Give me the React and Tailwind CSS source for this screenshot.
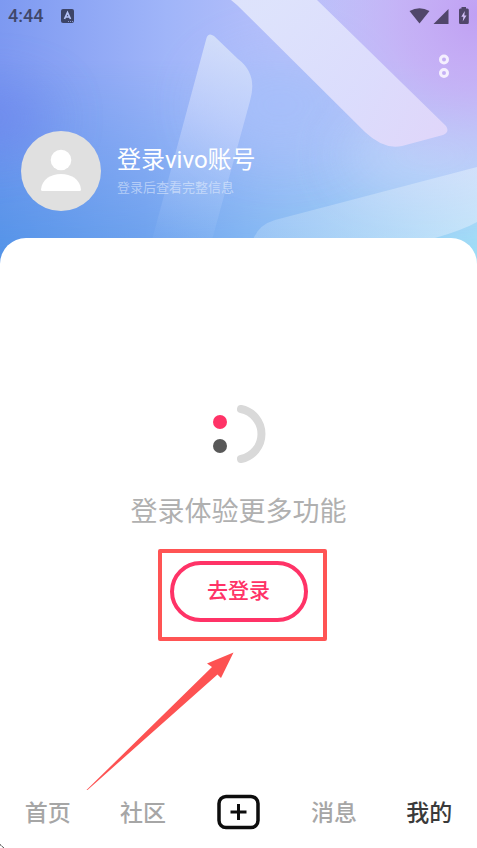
const FONT = "font-['Roboto','Noto_Sans_CJK_SC',sans-serif]";

function HeaderArt() {
  return (
    <svg
      className="absolute inset-0 h-full w-full"
      viewBox="0 0 477 268"
      preserveAspectRatio="none"
      aria-hidden="true"
    >
      <defs>
        <linearGradient id="base" x1="0" y1="0" x2="477" y2="0" gradientUnits="userSpaceOnUse">
          <stop offset="0" stopColor="#7d99f1" />
          <stop offset="0.35" stopColor="#a0b5f9" />
          <stop offset="0.6" stopColor="#b8c0fa" />
          <stop offset="1" stopColor="#c8bef8" />
        </linearGradient>
        <linearGradient id="low" x1="0" y1="0" x2="477" y2="0" gradientUnits="userSpaceOnUse">
          <stop offset="0" stopColor="#5594e8" />
          <stop offset="0.3" stopColor="#6ba1ed" />
          <stop offset="0.55" stopColor="#82b8f2" />
          <stop offset="1" stopColor="#9fdcf6" />
        </linearGradient>
        <linearGradient id="fade" x1="0" y1="60" x2="0" y2="250" gradientUnits="userSpaceOnUse">
          <stop offset="0" stopColor="#fff" stopOpacity="0" />
          <stop offset="1" stopColor="#fff" />
        </linearGradient>
        <mask id="lowMask">
          <rect width="477" height="268" fill="url(#fade)" />
        </mask>
        <linearGradient id="shardA" x1="225" y1="35" x2="185" y2="238" gradientUnits="userSpaceOnUse">
          <stop offset="0" stopColor="#e2ecf9" stopOpacity="0.72" />
          <stop offset="0.45" stopColor="#dce3ff" stopOpacity="0.4" />
          <stop offset="1" stopColor="#c8dcff" stopOpacity="0.06" />
        </linearGradient>
        <linearGradient id="shardB" x1="270" y1="0" x2="430" y2="140" gradientUnits="userSpaceOnUse">
          <stop offset="0" stopColor="#e1e6fc" />
          <stop offset="0.6" stopColor="#dfdffd" />
          <stop offset="1" stopColor="#e2d8fa" />
        </linearGradient>
        <linearGradient id="shardC" x1="477" y1="170" x2="260" y2="240" gradientUnits="userSpaceOnUse">
          <stop offset="0" stopColor="#e4effc" stopOpacity="0.55" />
          <stop offset="1" stopColor="#cfe5fa" stopOpacity="0.3" />
        </linearGradient>
        <radialGradient id="violet" cx="477" cy="15" r="170" gradientUnits="userSpaceOnUse">
          <stop offset="0" stopColor="#c0a0f3" />
          <stop offset="0.45" stopColor="#c6adf5" stopOpacity="0.7" />
          <stop offset="1" stopColor="#c8bef8" stopOpacity="0" />
        </radialGradient>
        <filter id="soft" x="-100%" y="-150%" width="300%" height="400%">
          <feGaussianBlur stdDeviation="28" />
        </filter>
      </defs>
      <rect width="477" height="268" fill="url(#base)" />
      <rect width="477" height="268" fill="url(#low)" mask="url(#lowMask)" />
      <ellipse cx="-10" cy="118" rx="60" ry="26" fill="#6f82ee" opacity="0.75" filter="url(#soft)" />
      <ellipse cx="280" cy="105" rx="75" ry="50" fill="#a6bffa" opacity="0.85" filter="url(#soft)" />
      <ellipse cx="430" cy="155" rx="85" ry="30" fill="#c0d4fb" opacity="0.9" filter="url(#soft)" />
      <rect width="477" height="268" fill="url(#violet)" />
      <path
        d="M206.500 38Q208.500 32 214 36L238 59Q258 74 250 101L212 240L152 240Z"
        fill="url(#shardA)"
      />
      <path
        d="M231 0L317 0L446 126Q450 132 443 135L402 146Q384 150 365 132L237 5Z"
        fill="url(#shardB)"
        opacity="0.92"
      />
      <path
        d="M253 240Q258 225 275 220L477 167L477 222Q463 230 435 238L420 242Z"
        fill="url(#shardC)"
      />
    </svg>
  );
}

function StatusBar() {
  return (
    <div className="relative flex h-8 items-center justify-between pr-2 pl-2 text-[#40486b]">
      <div className="flex items-center gap-[18px]">
        <span className="text-lg font-medium">4:44</span>
        <svg width="13" height="14" viewBox="0 0 13 14" aria-hidden="true">
          <rect width="13" height="14" rx="2" fill="#3c4467" />
          <path d="M3.500 10L6.500 3.500L9.500 10M4.600 8H8.400" fill="none" stroke="#b4c2f6" strokeWidth="1.700" />
          <path d="M7 12.500H12" stroke="#8c98cc" strokeWidth="1" strokeDasharray="1 1" />
        </svg>
      </div>
      <svg width="60" height="18" viewBox="0 0 60 18" fill="#50466a" aria-hidden="true">
        <path d="M0.500 4Q10.500 -1.500 20.500 4L10.500 16.500Z" />
        <path d="M39.500 2V17H24.500Z" />
        <path d="M52.500 0H57V1.500H58.500Q59.800 1.500 59.800 3V15.500Q59.800 17 58.500 17H51.300Q50 17 50 15.500V3Q50 1.500 51.300 1.500H52.500Z" />
        <path d="M55.800 4L52.300 9.800H54.400L53.700 14.500L57.500 8.400H55.300Z" fill="#d3c0f8" />
      </svg>
    </div>
  );
}

function Smile() {
  return (
    <svg width="54" height="60" viewBox="0 0 54 60" aria-hidden="true">
      <circle cx="8" cy="18" r="7" fill="#ff3367" />
      <circle cx="8" cy="42" r="7" fill="#585858" />
      <path d="M29 5A25.500 25.500 0 0 1 29 55" fill="none" stroke="#d9d9d9" strokeWidth="8" strokeLinecap="round" />
    </svg>
  );
}

function NavItem({ label, active }) {
  return (
    <a
      href="#"
      aria-current={active ? "page" : undefined}
      className={
        active
          ? "flex-1 pt-1 text-center text-[23px] leading-8 font-medium text-[#3a3a3a]"
          : "flex-1 pt-1 text-center text-[23px] leading-8 font-medium text-[#a6a6a6]"
      }
    >
      {label}
    </a>
  );
}

export default function App() {
  return (
    <div className={`${FONT} relative flex min-h-screen flex-col bg-white`}>
      <header className="relative h-[268px]">
        <HeaderArt />
        <StatusBar />
        <div className="relative flex justify-end pt-5 pr-6">
          <button type="button" aria-label="更多" className="block">
            <svg width="18" height="28" viewBox="0 0 18 28" fill="none" stroke="#f4effe" strokeWidth="3">
              <circle cx="9" cy="7.500" r="3.500" />
              <circle cx="9" cy="21" r="3.500" />
            </svg>
          </button>
        </div>
        <div className="relative mt-[51px] flex items-center gap-4 pl-[21px]">
          <svg width="80" height="80" viewBox="0 0 80 80" aria-hidden="true">
            <circle cx="40" cy="40" r="40" fill="#e0e0e0" />
            <circle cx="40" cy="29" r="10.300" fill="#fff" />
            <path d="M20 58.500C21 48 30 43 40 43S59 48 60 58.500Q60 60 58.500 60H21.500Q20 60 20 58.500Z" fill="#fff" />
          </svg>
          <div className="pb-0.5 text-white">
            <h1 className="text-2xl leading-9 font-normal">登录vivo账号</h1>
            <p className="text-[13px] leading-5 font-normal text-white/45">登录后查看完整信息</p>
          </div>
        </div>
      </header>

      <main className="relative -mt-[30px] flex flex-1 flex-col items-center rounded-t-[26px] bg-white pt-[166px]">
        <Smile />
        <p className="mt-7 text-[27px] leading-10 font-normal text-[#b0b0b0]">登录体验更多功能</p>
        <div className="relative mt-[29px]">
          <button
            type="button"
            className="block h-[61px] w-[138px] rounded-full border-4 border-[#ff3367] text-[21px] font-medium text-[#ff3367]"
          >
            去登录
          </button>
          <div className="pointer-events-none absolute -top-3 -right-[19px] -bottom-[19px] -left-3 rounded-xs border-4 border-[#ff5454]" />
          <svg
            className="pointer-events-none absolute top-[91px] -left-[84px]"
            width="150"
            height="140"
            viewBox="0 0 150 140"
            fill="#fd5252"
            aria-hidden="true"
          >
            <path d="M147.500 0.500L121 11.500L126 15L0.500 138L1.500 138L131.500 22.500L135 26Z" />
          </svg>
        </div>
      </main>

      <nav className="relative flex items-center pt-4 pb-[18px]">
        <NavItem label="首页" />
        <NavItem label="社区" />
        <div className="flex flex-1 justify-center">
          <button type="button" aria-label="发布">
            <svg className="block" width="44" height="36" viewBox="0 0 44 36" fill="none" stroke="#0d0d0d">
              <rect x="2" y="2.500" width="39" height="31" rx="7" strokeWidth="3.500" />
              <path d="M21.500 10V26M13.500 18H29.500" strokeWidth="3" />
            </svg>
          </button>
        </div>
        <NavItem label="消息" />
        <NavItem label="我的" active />
      </nav>
      <svg className="absolute bottom-0 left-0" width="4" height="4" viewBox="0 0 4 4" aria-hidden="true">
        <path d="M0 0.500L4 4" stroke="#222" strokeDasharray="2 1" />
      </svg>
    </div>
  );
}
